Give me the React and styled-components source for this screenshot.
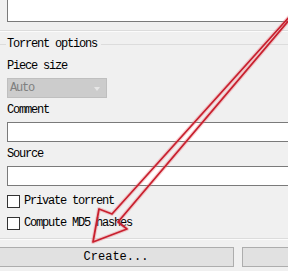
import React from "react";
import styled, { createGlobalStyle } from "styled-components";

const GlobalStyle = createGlobalStyle`
  html, body {
    margin: 0;
    padding: 0;
    background: #f0f0f0;
  }
  body {
    overflow: hidden;
    font-family: "Liberation Mono", "Noto Sans CJK SC", monospace;
  }
`;

const Window = styled.div`
  position: relative;
  width: 288px;
  height: 271px;
  overflow: hidden;
  background: #f0f0f0;
  color: #000;
  font-size: 12px;
  line-height: 12px;
  letter-spacing: -1.2px;
`;

// the notes box left over from the section above
const NotesBox = styled.div`
  margin-left: 7px;
  width: 340px;
  height: 21px;
  background: #fff;
  border-left: 1px solid #7a7a7a;
  border-bottom: 1px solid #7a7a7a;
`;

const Etched = styled.div`
  width: 340px;
  height: 1px;
  margin-top: ${(p) => p.$top || 0}px;
  background: #dcdcdc;
  box-shadow: 0 1px 0 #fbfbfb;
`;

const Group = styled.section`
  margin-top: 7px;
`;

const GroupHeader = styled.div`
  display: flex;
  height: 12px;
`;

const HeaderRule = styled.span`
  height: 1px;
  margin-top: 6px;
  background: #dcdcdc;
  width: ${(p) => (p.$grow ? "auto" : "6px")};
  flex: ${(p) => (p.$grow ? 1 : "none")};
`;

const HeaderTitle = styled.span`
  margin: 0 4px 0 1px;
  white-space: nowrap;
`;

const GroupBody = styled.div`
  display: flex;
  flex-direction: column;
  gap: 6px;
  padding: 10px 0 8px 7px;
`;

const Label = styled.div`
  height: 12px;
  white-space: nowrap;
`;

const Combo = styled.div`
  box-sizing: border-box;
  width: 100px;
  height: 20px;
  display: flex;
  align-items: center;
  justify-content: space-between;
  padding: 0 6px 0 2px;
  background: #cccccc;
  border: 1px solid #bfbfbf;
  color: #7f7f7f;
`;

const ComboArrow = styled.span`
  width: 0;
  height: 0;
  border-left: 3px solid transparent;
  border-right: 3px solid transparent;
  border-top: 4px solid #e6e6e6;
  margin-top: 2px;
`;

const TextInput = styled.div`
  box-sizing: border-box;
  width: 340px;
  height: 20px;
  background: #fff;
  border: 1px solid #7a7a7a;
`;

const CheckRow = styled.label`
  display: flex;
  align-items: center;
  gap: 4px;
  height: 16px;
  white-space: nowrap;
`;

const CheckBox = styled.span`
  box-sizing: border-box;
  width: 13px;
  height: 13px;
  margin-top: 2px;
  background: #fff;
  border: 1px solid #333;
`;

const CheckText = styled.span`
  margin-top: 2px;
`;

const ButtonBar = styled.div`
  display: flex;
  gap: 8px;
  margin-top: 8px;
  margin-left: -2px;
`;

const Button = styled.button`
  box-sizing: border-box;
  flex: none;
  width: ${(p) => p.$width}px;
  height: 20px;
  padding: 0;
  background: #e1e1e1;
  border: 1px solid #adadad;
  font: inherit;
  color: #000;
`;

const Overlay = styled.svg`
  position: absolute;
  left: 0;
  top: 0;
  pointer-events: none;
`;

const arrowPath =
  "M290 16 L112 214 L99 209 L93 242 L127 229 L118 222 L290 19";

export default function App() {
  return (
    <Window>
      <GlobalStyle />
      <NotesBox />
      <Etched $top={8} />
      <Group>
        <GroupHeader>
          <HeaderRule />
          <HeaderTitle>Torrent options</HeaderTitle>
          <HeaderRule $grow />
        </GroupHeader>
        <GroupBody>
          <Label>Piece size</Label>
          <Combo>
            <span>Auto</span>
            <ComboArrow />
          </Combo>
          <Label>Comment</Label>
          <TextInput />
          <Label>Source</Label>
          <TextInput />
          <CheckRow>
            <CheckBox />
            <CheckText>Private torrent</CheckText>
          </CheckRow>
          <CheckRow>
            <CheckBox />
            <CheckText>Compute MD5 hashes</CheckText>
          </CheckRow>
        </GroupBody>
        <Etched />
      </Group>
      <ButtonBar>
        <Button $width={236}>Create...</Button>
        <Button $width={80} />
      </ButtonBar>
      <Overlay width="288" height="271" viewBox="0 0 288 271">
        <path
          d={arrowPath}
          fill="none"
          stroke="rgba(235, 120, 130, 0.35)"
          strokeWidth="4"
          strokeLinejoin="round"
        />
        <path
          d={arrowPath}
          fill="none"
          stroke="#c8202e"
          strokeWidth="1.8"
          strokeLinejoin="round"
        />
      </Overlay>
    </Window>
  );
}
